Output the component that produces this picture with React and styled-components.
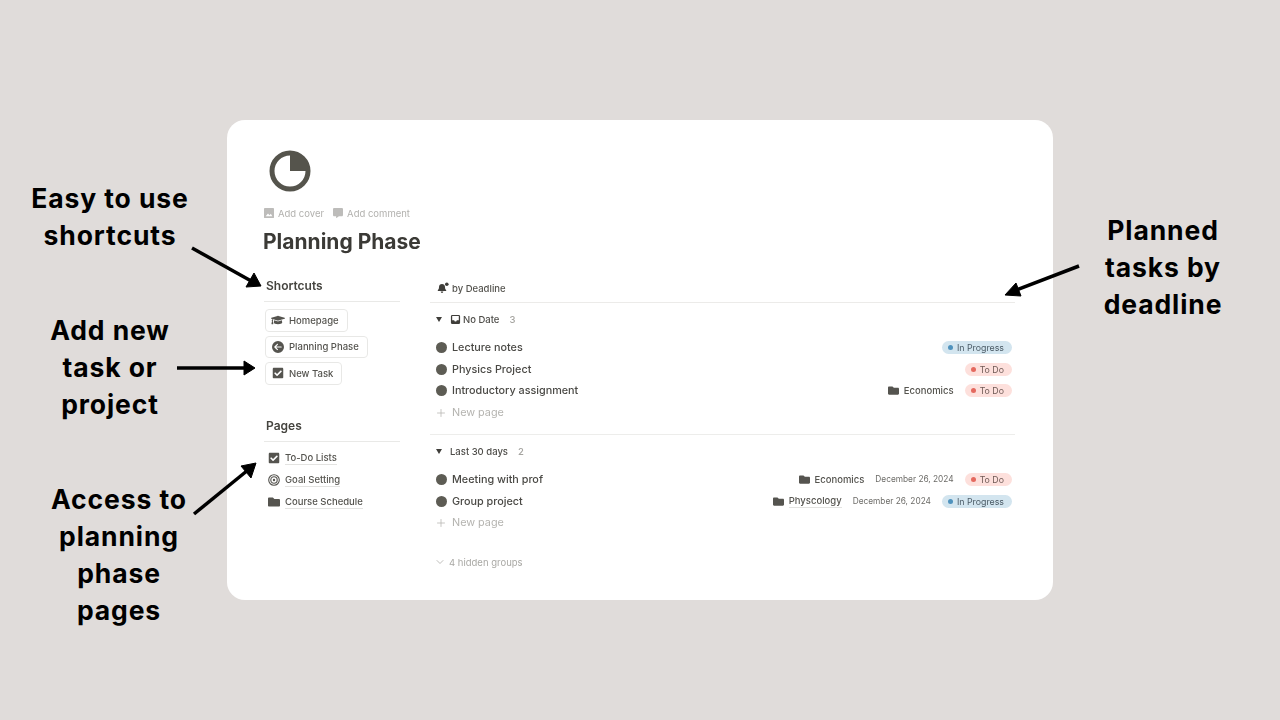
import React from "react"
import styled, { createGlobalStyle } from "styled-components"
import { FaGraduationCap, FaCheckSquare, FaCommentAlt, FaFolder } from "react-icons/fa"
import { FaCircleArrowLeft } from "react-icons/fa6"
import { Plus, ChevronDown } from "lucide-react"

const GlobalStyle = createGlobalStyle`
  html, body {
    margin: 0;
    padding: 0;
    background: #e0dcda;
  }
`

const Stage = styled.div`
  position: relative;
  display: flex;
  align-items: center;
  justify-content: center;
  width: 1280px;
  height: 720px;
  overflow: hidden;
  background: #e0dcda;
`
const Card = styled.div`
  box-sizing: border-box;
  width: 826px;
  height: 480px;
  padding: 30px 38px 0 37px;
  background: #fff;
  border-radius: 18px;
  font-family: "Inter", sans-serif;
  color: #4a4945;
`
const Inner = styled.div`
  filter: blur(0.45px);
`
const PageIcon = styled.svg`
  display: block;
  width: 42px;
  height: 42px;
  margin-left: 5px;
`
const MetaRow = styled.div`
  display: flex;
  align-items: center;
  gap: 9px;
  height: 14px;
  margin-top: 14px;
`
const MetaItem = styled.span`
  display: flex;
  align-items: center;
  gap: 4px;
  font-size: 9.5px;
  color: #b2b1ae;
  svg { width: 10px; height: 10px; color: #bdbcba; }
`
const Title = styled.h1`
  margin: 9px 0 0 -1px;
  font-size: 21px;
  line-height: 26px;
  font-weight: 700;
  letter-spacing: 0;
  color: #3b3a36;
`
const Columns = styled.div`
  display: grid;
  grid-template-columns: 136px 585px;
  column-gap: 30px;
  margin-top: 24px;
`
const Side = styled.div`
  display: flex;
  flex-direction: column;
`
const SideHeading = styled.h2`
  margin: 0;
  padding: 0 0 7px 2px;
  height: 15px;
  line-height: 14px;
  font-size: 12px;
  font-weight: 600;
  color: #45443f;
  border-bottom: 1px solid #e9e9e7;
  margin-top: ${p => p.$top || 0}px;
`
const ButtonList = styled.div`
  display: flex;
  flex-direction: column;
  align-items: flex-start;
  gap: 4px;
  margin-top: 7px;
`
const ShortcutButton = styled.div`
  display: flex;
  align-items: center;
  gap: 5px;
  box-sizing: border-box;
  height: 22.5px;
  margin-left: 1px;
  padding: 0 8px 0 6px;
  border: 1px solid #e8e8e6;
  border-radius: 4px;
  font-size: 9.5px;
  font-weight: 500;
  color: #55544f;
  svg { width: 12px; height: 12px; color: #55544f; flex: none; }
`
const PageList = styled.div`
  display: flex;
  flex-direction: column;
  gap: 4px;
  margin-top: 7px;
`
const PageLink = styled.div`
  display: flex;
  align-items: center;
  gap: 5px;
  height: 18px;
  padding-left: 4px;
  font-size: 9.5px;
  font-weight: 500;
  color: #55544f;
  svg { width: 12px; height: 12px; color: #55544f; flex: none; }
`
const Underlined = styled.span`
  line-height: 13px;
  border-bottom: 1px solid #e3e3e1;
`
const Main = styled.div`
  display: flex;
  flex-direction: column;
`
const ViewBar = styled.div`
  display: flex;
  align-items: center;
  gap: 3px;
  box-sizing: border-box;
  height: 25px;
  margin-top: -1px;
  padding: 0 0 4px 7px;
  font-size: 9.5px;
  font-weight: 500;
  color: #55544f;
  border-bottom: 1px solid #ecebe9;
  svg { width: 12px; height: 12px; }
`
const Group = styled.section`
  padding-top: 8px;
  border-bottom: ${p => (p.$divider ? "1px solid #ededeb" : "none")};
  padding-bottom: ${p => (p.$divider ? 10.5 : 0)}px;
`
const GroupHeader = styled.div`
  display: flex;
  align-items: center;
  height: 16px;
  padding-left: 6px;
  font-size: 9.5px;
  font-weight: 500;
  color: #4e4d49;
  svg { flex: none; }
`
const Triangle = styled.span`
  width: 0;
  height: 0;
  margin-right: 8px;
  border-left: 3px solid transparent;
  border-right: 3px solid transparent;
  border-top: 5px solid #3f3e3a;
`
const Count = styled.span`
  margin-left: 10px;
  color: #a5a4a0;
`
const Rows = styled.div`
  margin-top: 9.5px;
`
const Row = styled.div`
  display: flex;
  align-items: center;
  height: 21.7px;
  padding: 0 3px 0 6px;
`
const Dot = styled.span`
  flex: none;
  width: 11px;
  height: 11px;
  margin-right: 5px;
  border-radius: 50%;
  background: #5d5c54;
`
const RowName = styled.span`
  margin-right: auto;
  font-size: 10.8px;
  font-weight: 500;
  color: #4a4945;
`
const Folder = styled.span`
  display: flex;
  align-items: center;
  gap: 5px;
  font-size: 9.5px;
  font-weight: 500;
  color: #55544f;
  svg { width: 11px; height: 11px; color: #55544f; flex: none; }
`
const DateText = styled.span`
  margin-left: 11px;
  font-size: 8.3px;
  color: #6d6c68;
`
const Pill = styled.span`
  display: flex;
  align-items: center;
  gap: 4px;
  height: 13px;
  margin-left: 11px;
  padding: 0 8px 0 6px;
  border-radius: 7px;
  font-size: 8.8px;
  color: ${p => (p.$status === "todo" ? "#6f5a56" : "#4b5b66")};
  background: ${p => (p.$status === "todo" ? "#fde0dc" : "#d3e5ef")};
  &::before {
    content: "";
    width: 5px;
    height: 5px;
    border-radius: 50%;
    background: ${p => (p.$status === "todo" ? "#e4695f" : "#4f92bd")};
  }
`
const NewPage = styled.div`
  display: flex;
  align-items: center;
  gap: 5px;
  height: 22px;
  padding-left: 5px;
  font-size: 10.8px;
  color: #b4b3af;
  svg { width: 12px; height: 12px; }
`
const HiddenGroups = styled.div`
  display: flex;
  align-items: center;
  gap: 3px;
  margin-top: 22.5px;
  padding-left: 4px;
  font-size: 9.5px;
  color: #a9a8a4;
  svg { width: 12px; height: 12px; }
`
const Caption = styled.div`
  position: absolute;
  top: ${p => p.$top}px;
  left: ${p => p.$center - 120}px;
  width: 240px;
  text-align: center;
  font-family: "Inter", sans-serif;
  font-size: 26.5px;
  line-height: 37px;
  font-weight: 700;
  letter-spacing: 0.9px;
  color: #000;
`
const ArrowLayer = styled.svg`
  position: absolute;
  inset: 0;
  width: 1280px;
  height: 720px;
  pointer-events: none;
`

const statusLabel = { todo: "To Do", progress: "In Progress" }

const groups = [
  {
    title: "No Date",
    count: 3,
    icon: true,
    divider: true,
    rows: [
      { name: "Lecture notes", status: "progress" },
      { name: "Physics Project", status: "todo" },
      { name: "Introductory assignment", folder: "Economics", status: "todo" },
    ],
  },
  {
    title: "Last 30 days",
    count: 2,
    rows: [
      { name: "Meeting with prof", folder: "Economics", date: "December 26, 2024", status: "todo" },
      { name: "Group project", folder: "Physcology", date: "December 26, 2024", status: "progress", underline: true },
    ],
  },
]

const arrows = [
  { from: [192, 248], to: [253, 282], head: "261,286 246,287 254,273" },
  { from: [177, 368], to: [246, 368], head: "255,368 244,361 244,375" },
  { from: [194, 514], to: [248, 470], head: "256,463 251,478 241,466" },
  { from: [1079, 266], to: [1014, 291], head: "1005,295 1016,283 1021,296" },
]

function CoverIcon() {
  return (
    <svg viewBox="0 0 12 12">
      <rect x="0" y="0" width="12" height="12" rx="1" fill="currentColor" />
      <path d="M2 10l2.8-3.4 1.8 2 1.6-1.6L10 10z" fill="#fff" />
    </svg>
  )
}

function TargetIcon() {
  return (
    <svg viewBox="0 0 12 12" fill="none" stroke="currentColor">
      <circle cx="6" cy="6" r="5.3" strokeWidth="1.1" />
      <circle cx="6" cy="6" r="3.2" strokeWidth="1.1" />
      <circle cx="6" cy="6" r="1.2" fill="currentColor" stroke="none" />
    </svg>
  )
}

function InboxIcon() {
  return (
    <svg viewBox="0 0 12 12" width="11" height="11" style={{ marginRight: 2 }}>
      <path
        fillRule="evenodd"
        fill="#3f3e3a"
        d="M2.5 1h7A1.5 1.5 0 0 1 11 2.5v7A1.5 1.5 0 0 1 9.5 11h-7A1.5 1.5 0 0 1 1 9.5v-7A1.5 1.5 0 0 1 2.5 1zM2.4 2.3v4.6h2.2a1.4 1.4 0 0 0 2.8 0h2.2V2.3z"
      />
    </svg>
  )
}

function BellIcon() {
  return (
    <svg viewBox="0 0 12 12" fill="#3f3e3a">
      <path d="M5 2c-1.8 0-3 1.3-3 3.1 0 1.6-.4 2.4-1.2 3.2v.7h8.4v-.7C8.4 7.5 8 6.7 8 5.1 8 3.3 6.8 2 5 2z" />
      <path d="M3.7 9.6h2.6a1.3 1.3 0 0 1-2.6 0z" />
      <circle cx="9.8" cy="2.2" r="1.8" />
    </svg>
  )
}

function App() {
  return (
    <Stage>
      <GlobalStyle />
      <Card>
        <Inner>
          <PageIcon viewBox="0 0 42 42">
            <circle cx="21" cy="21" r="18" fill="none" stroke="#55544c" strokeWidth="5" />
            <path d="M21 3a18 18 0 0 1 18 18H21z" fill="#55544c" />
          </PageIcon>
          <MetaRow>
            <MetaItem><CoverIcon />Add cover</MetaItem>
            <MetaItem><FaCommentAlt />Add comment</MetaItem>
          </MetaRow>
          <Title>Planning Phase</Title>
          <Columns>
            <Side>
              <SideHeading>Shortcuts</SideHeading>
              <ButtonList>
                <ShortcutButton><FaGraduationCap style={{ width: 14, height: 14, margin: "0 -1px" }} />Homepage</ShortcutButton>
                <ShortcutButton><FaCircleArrowLeft />Planning Phase</ShortcutButton>
                <ShortcutButton><FaCheckSquare />New Task</ShortcutButton>
              </ButtonList>
              <SideHeading $top={34}>Pages</SideHeading>
              <PageList>
                <PageLink><FaCheckSquare /><Underlined>To-Do Lists</Underlined></PageLink>
                <PageLink><TargetIcon /><Underlined>Goal Setting</Underlined></PageLink>
                <PageLink><FaFolder /><Underlined>Course Schedule</Underlined></PageLink>
              </PageList>
            </Side>
            <Main>
              <ViewBar><BellIcon />by Deadline</ViewBar>
              {groups.map(group => (
                <Group key={group.title} $divider={group.divider}>
                  <GroupHeader>
                    <Triangle />
                    {group.icon && <InboxIcon />}
                    {group.title}
                    <Count>{group.count}</Count>
                  </GroupHeader>
                  <Rows>
                    {group.rows.map(row => (
                      <Row key={row.name}>
                        <Dot />
                        <RowName>{row.name}</RowName>
                        {row.folder && (
                          <Folder>
                            <FaFolder />
                            {row.underline ? <Underlined>{row.folder}</Underlined> : row.folder}
                          </Folder>
                        )}
                        {row.date && <DateText>{row.date}</DateText>}
                        <Pill $status={row.status}>{statusLabel[row.status]}</Pill>
                      </Row>
                    ))}
                  </Rows>
                  <NewPage><Plus strokeWidth={1.5} />New page</NewPage>
                </Group>
              ))}
              <HiddenGroups><ChevronDown strokeWidth={1.5} />4 hidden groups</HiddenGroups>
            </Main>
          </Columns>
        </Inner>
      </Card>
      <Caption $center={110} $top={180}>Easy to use<br />shortcuts</Caption>
      <Caption $center={110} $top={312}>Add new<br />task or<br />project</Caption>
      <Caption $center={119} $top={481}>Access to<br />planning<br />phase<br />pages</Caption>
      <Caption $center={1163} $top={212}>Planned<br />tasks by<br />deadline</Caption>
      <ArrowLayer viewBox="0 0 1280 720">
        {arrows.map(a => (
          <g key={a.head}>
            <line x1={a.from[0]} y1={a.from[1]} x2={a.to[0]} y2={a.to[1]} stroke="#000" strokeWidth="3.5" />
            <polygon points={a.head} fill="#000" stroke="#000" strokeWidth="1" strokeLinejoin="round" />
          </g>
        ))}
      </ArrowLayer>
    </Stage>
  )
}

export default App
